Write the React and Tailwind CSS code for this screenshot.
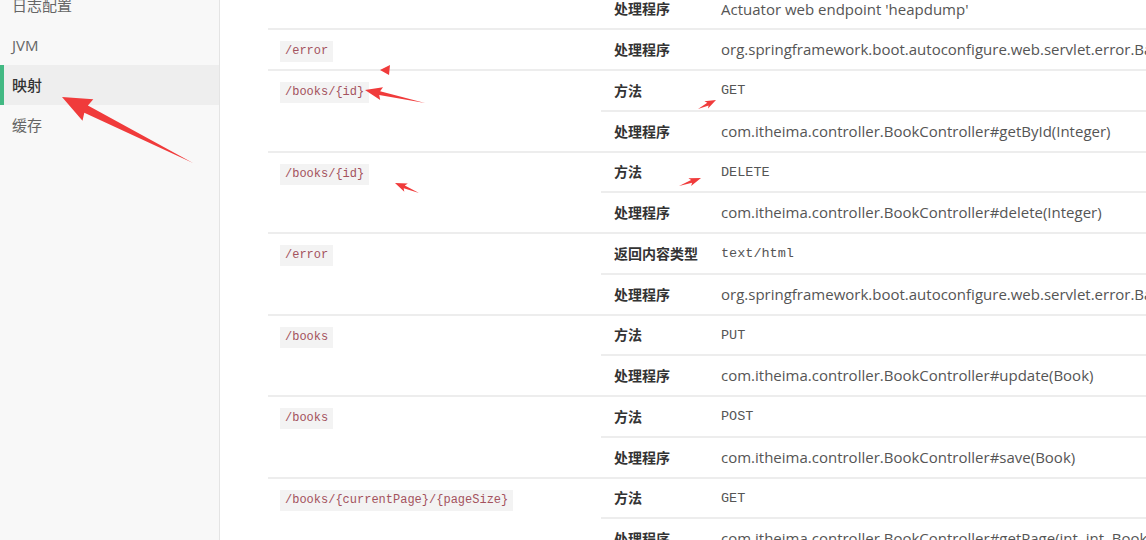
const sideItems = [
    { label: "日志配置" },
    { label: "JVM" },
    { label: "映射", active: true },
    { label: "缓存" },
];

const groups = [
    {
        path: null,
        rows: [{ key: "处理程序", value: "Actuator web endpoint 'heapdump'" }],
    },
    {
        path: "/error",
        rows: [
            {
                key: "处理程序",
                value: "org.springframework.boot.autoconfigure.web.servlet.error.BasicErrorController#error(HttpServletRequest)",
            },
        ],
    },
    {
        path: "/books/{id}",
        rows: [
            { key: "方法", value: "GET", mono: true },
            { key: "处理程序", value: "com.itheima.controller.BookController#getById(Integer)" },
        ],
    },
    {
        path: "/books/{id}",
        rows: [
            { key: "方法", value: "DELETE", mono: true },
            { key: "处理程序", value: "com.itheima.controller.BookController#delete(Integer)" },
        ],
    },
    {
        path: "/error",
        rows: [
            { key: "返回内容类型", value: "text/html", mono: true },
            {
                key: "处理程序",
                value: "org.springframework.boot.autoconfigure.web.servlet.error.BasicErrorController#errorHtml(HttpServletRequest, HttpServletResponse)",
            },
        ],
    },
    {
        path: "/books",
        rows: [
            { key: "方法", value: "PUT", mono: true },
            { key: "处理程序", value: "com.itheima.controller.BookController#update(Book)" },
        ],
    },
    {
        path: "/books",
        rows: [
            { key: "方法", value: "POST", mono: true },
            { key: "处理程序", value: "com.itheima.controller.BookController#save(Book)" },
        ],
    },
    {
        path: "/books/{currentPage}/{pageSize}",
        rows: [
            { key: "方法", value: "GET", mono: true },
            { key: "处理程序", value: "com.itheima.controller.BookController#getPage(int, int, Book)" },
        ],
    },
];

// tapered arrow, thin at the tail and widening into the head
const arrowPoints = (x1, y1, x2, y2, headLen, headW, shaftW) => {
    const dx = x2 - x1;
    const dy = y2 - y1;
    const len = Math.hypot(dx, dy);
    const ux = dx / len;
    const uy = dy / len;
    const nx = -uy;
    const ny = ux;
    const bx = x2 - ux * headLen;
    const by = y2 - uy * headLen;
    const pts = [
        [x1, y1],
        [bx + nx * shaftW / 2, by + ny * shaftW / 2],
        [bx + nx * headW / 2 - ux * 2, by + ny * headW / 2 - uy * 2],
        [x2, y2],
        [bx - nx * headW / 2 - ux * 2, by - ny * headW / 2 - uy * 2],
        [bx - nx * shaftW / 2, by - ny * shaftW / 2],
    ];
    return pts.map(p => p.map(n => n.toFixed(1)).join(",")).join(" ");
};

const Arrows = () => {
    return (
        <svg className="pointer-events-none absolute left-0 top-0" width="1146" height="540">
            <g fill="#f03b3b">
                <polygon points={arrowPoints(193, 163, 62, 97, 27, 24, 8)} />
                <polygon points="380,70 390,65 389,75" />
                <polygon points={arrowPoints(425, 103, 365, 90, 15, 13, 4)} />
                <polygon points={arrowPoints(419, 193, 395, 183, 10, 9, 3)} />
                <polygon points={arrowPoints(698, 109, 716, 100, 9, 8, 3)} />
                <polygon points={arrowPoints(679, 186, 701, 178, 10, 8, 3)} />
            </g>
        </svg>
    );
};

const Sidebar = () => {
    return (
        <aside className="w-[220px] shrink-0 border-r border-[#e4e4e4] bg-[#f8f8f8]">
            <ul className="-mt-[15px]">
                {sideItems.map(item => (
                    <li
                        key={item.label}
                        className={`relative flex h-[40px] items-center pl-[12px] text-[15px] ${
                            item.active ? "bg-[#eeeeee] text-[#333] font-medium" : "text-[#666]"
                        }`}
                    >
                        {item.active && (
                            <span className="absolute left-0 top-0 h-full w-[4px] bg-[#42b983]" />
                        )}
                        {item.label}
                    </li>
                ))}
            </ul>
        </aside>
    );
};

const Group = ({ path, rows }) => {
    return (
        <div className="flex">
            <div className="flex w-[333px] shrink-0 items-start border-b-2 border-[#ededed] pl-[12px] pt-[11px]">
                {path && (
                    <code className="block bg-[#f3f3f3] px-[5px] py-[2px] font-['Liberation_Mono',monospace] text-[12px] leading-[17px] text-[#a4525d]">
                        {path}
                    </code>
                )}
            </div>
            <div className="min-w-0 flex-1">
                {rows.map((row, i) => (
                    <div
                        key={i}
                        className="flex h-[40.75px] items-center border-b-2 border-[#ededed]"
                    >
                        <div className="w-[107px] shrink-0 pl-[13px] text-[14px] font-bold text-[#333]">
                            {row.key}
                        </div>
                        <div
                            className={`whitespace-nowrap pl-[13px] text-[#555] ${
                                row.mono
                                    ? "pt-[2px] font-['Liberation_Mono',monospace] text-[13.5px]"
                                    : "font-['Open_Sans','Noto_Sans_CJK_SC',sans-serif] text-[15px]"
                            }`}
                        >
                            {row.value}
                        </div>
                    </div>
                ))}
            </div>
        </div>
    );
};

const App = () => {
    return (
        <div className="relative flex h-[540px] w-[1146px] overflow-hidden bg-white font-['Open_Sans','Noto_Sans_CJK_SC',sans-serif]">
            <Sidebar />
            <main className="min-w-0 flex-1 overflow-hidden pl-[48px]">
                <div className="-mt-[10.5px]">
                    {groups.map((g, i) => (
                        <Group key={i} {...g} />
                    ))}
                </div>
            </main>
            <Arrows />
        </div>
    );
};

export default App;
